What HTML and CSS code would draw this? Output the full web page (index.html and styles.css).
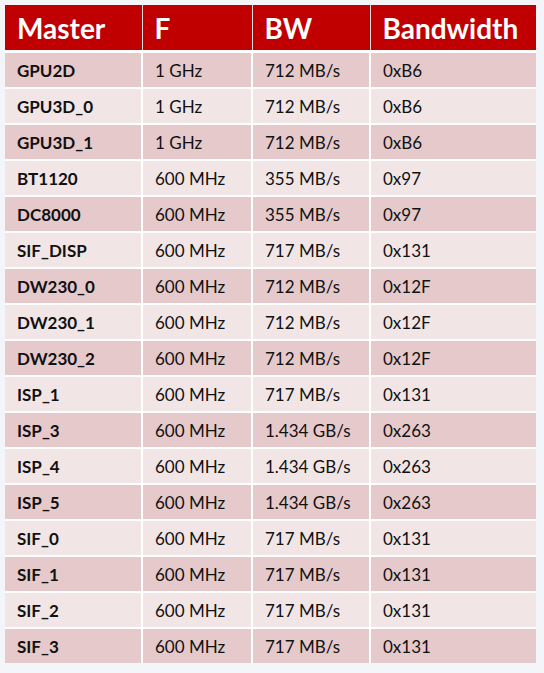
FILE: index.html
```html
<!DOCTYPE html>
<html lang="en">
<head>
    <meta charset="UTF-8">
    <title>Master Bandwidth</title>
    <link rel="stylesheet" href="styles.css">
</head>
<body>
    <table class="bw-table">
        <colgroup>
            <col class="col-master">
            <col class="col-f">
            <col class="col-bw">
            <col class="col-band">
        </colgroup>
        <thead>
            <tr>
                <th>Master</th>
                <th>F</th>
                <th>BW</th>
                <th>Bandwidth</th>
            </tr>
        </thead>
        <tbody>
            <tr><td>GPU2D</td><td>1 GHz</td><td>712 MB/s</td><td>0xB6</td></tr>
            <tr><td>GPU3D_0</td><td>1 GHz</td><td>712 MB/s</td><td>0xB6</td></tr>
            <tr><td>GPU3D_1</td><td>1 GHz</td><td>712 MB/s</td><td>0xB6</td></tr>
            <tr><td>BT1120</td><td>600 MHz</td><td>355 MB/s</td><td>0x97</td></tr>
            <tr><td>DC8000</td><td>600 MHz</td><td>355 MB/s</td><td>0x97</td></tr>
            <tr><td>SIF_DISP</td><td>600 MHz</td><td>717 MB/s</td><td>0x131</td></tr>
            <tr><td>DW230_0</td><td>600 MHz</td><td>712 MB/s</td><td>0x12F</td></tr>
            <tr><td>DW230_1</td><td>600 MHz</td><td>712 MB/s</td><td>0x12F</td></tr>
            <tr><td>DW230_2</td><td>600 MHz</td><td>712 MB/s</td><td>0x12F</td></tr>
            <tr><td>ISP_1</td><td>600 MHz</td><td>717 MB/s</td><td>0x131</td></tr>
            <tr><td>ISP_3</td><td>600 MHz</td><td>1.434 GB/s</td><td>0x263</td></tr>
            <tr><td>ISP_4</td><td>600 MHz</td><td>1.434 GB/s</td><td>0x263</td></tr>
            <tr><td>ISP_5</td><td>600 MHz</td><td>1.434 GB/s</td><td>0x263</td></tr>
            <tr><td>SIF_0</td><td>600 MHz</td><td>717 MB/s</td><td>0x131</td></tr>
            <tr><td>SIF_1</td><td>600 MHz</td><td>717 MB/s</td><td>0x131</td></tr>
            <tr><td>SIF_2</td><td>600 MHz</td><td>717 MB/s</td><td>0x131</td></tr>
            <tr><td>SIF_3</td><td>600 MHz</td><td>717 MB/s</td><td>0x131</td></tr>
        </tbody>
    </table>
</body>
</html>
```

FILE: styles.css
```css
body {
    margin: 0;
    padding: 5px 0 0 5px;
    background: #f3f5f8;
    font-family: Lato, "Open Sans", sans-serif;
    height: 673px;
    box-sizing: border-box;
}

.bw-table {
    border-collapse: collapse;
    table-layout: fixed;
    width: 531px;
}

.col-master {
    width: 137px;
}

.col-f {
    width: 110px;
}

.col-bw {
    width: 118px;
}

.col-band {
    width: 166px;
}

.bw-table th {
    background: #c00000;
    color: #fff;
    font-size: 28px;
    font-weight: bold;
    text-align: left;
    height: 45px;
    padding: 0 12px;
    border-left: 1px solid #f2dcdc;
    border-bottom: 3px solid #fff;
}

.bw-table th:first-child,
.bw-table td:first-child {
    border-left: none;
}

.bw-table td {
    height: 34px;
    padding: 0 12px;
    font-size: 17px;
    color: #111;
    border-left: 2px solid #fff;
    border-top: 2px solid #fff;
}

.bw-table tbody tr:first-child td {
    border-top: none;
}

.bw-table td:first-child {
    font-weight: bold;
}

.bw-table tbody tr:nth-child(odd) {
    background: #e6c9cb;
}

.bw-table tbody tr:nth-child(even) {
    background: #f2e5e6;
}
```
